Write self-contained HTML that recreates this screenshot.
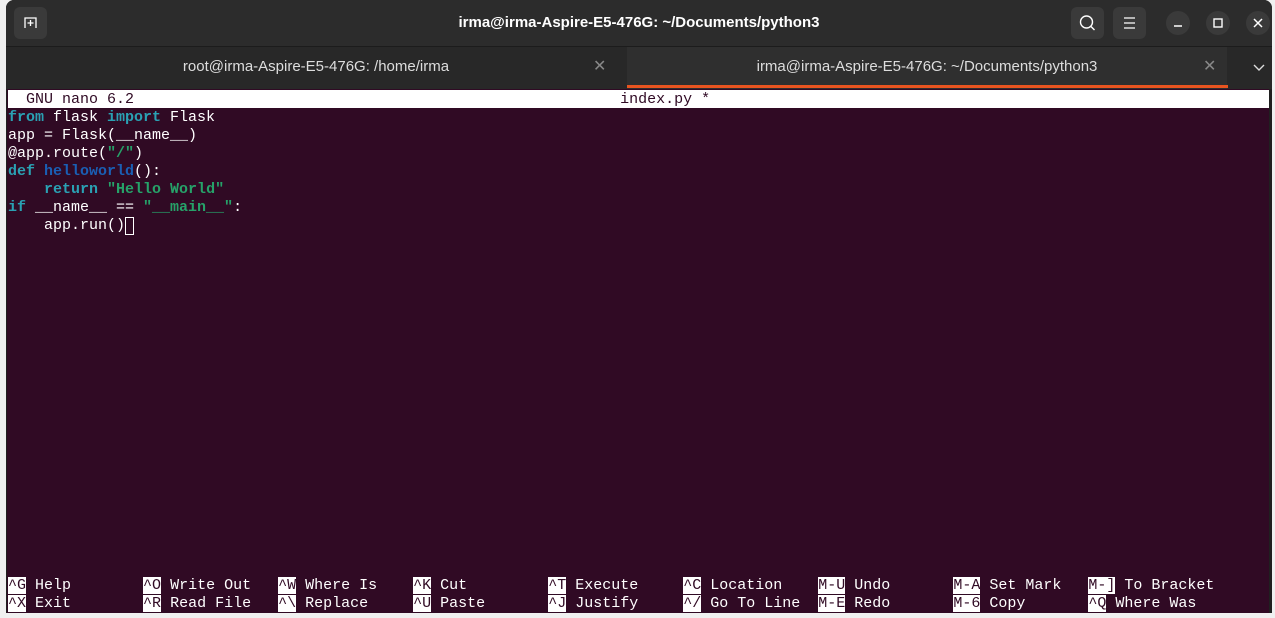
<!DOCTYPE html><html><head><style>
body{margin:0;width:1275px;height:618px;background:#f0f0f0;position:relative;overflow:hidden;font-family:"Liberation Sans",sans-serif}
.win{position:absolute;left:6px;top:0;width:1266px;height:613px;background:#202020;border-radius:8px 8px 0 0;overflow:hidden}
.tb{position:absolute;left:0;top:0;width:100%;height:46px;background:#2c2c2c;border-bottom:1px solid #1c1c1c}
.title{position:absolute;top:14px;left:0;width:100%;text-align:center;color:#fff;font-weight:bold;font-size:15px}
.btn{position:absolute;top:7px;width:33px;height:32px;background:#3a3a3a;border-radius:6px}
.cb{position:absolute;top:11px;width:24px;height:24px;border-radius:50%;background:#3a3a3a;color:#fff;text-align:center;line-height:24px;font-size:14px}
.tabs{position:absolute;top:47px;left:0;width:100%;height:42px;background:#282828}
.tab{position:absolute;top:0;height:42px;line-height:40px;text-align:center;color:#ddd;font-size:15px}
.x{position:absolute;top:0;color:#888;font-size:16px;line-height:40px}
.term{position:absolute;left:1px;top:89px;width:1262px;height:524px;background:#300a24;font-family:"Liberation Mono",monospace;font-size:15px;line-height:18px;color:#fff;white-space:pre}
.row{position:absolute;left:1px;height:18px}
.k{color:#2aa1b3;font-weight:bold}.f{color:#1a5fb4;font-weight:bold}.s{color:#26a269;font-weight:bold}
.inv{background:#fff;color:#300a24}
</style></head><body>
<div class="win">
<div class="tb">
<div class="btn" style="left:8px"><svg width="33" height="32"><path d="M11 21V11h11v10M16.5 13v6M13.5 16h6" stroke="#fff" stroke-width="1.3" fill="none"/></svg></div>
<div class="title">irma@irma-Aspire-E5-476G: ~/Documents/python3</div>
<div class="btn" style="left:1065px"><svg width="33" height="32"><circle cx="15.5" cy="15" r="6" stroke="#fff" stroke-width="1.4" fill="none"/><path d="M20 19.5l3.5 3.5" stroke="#fff" stroke-width="1.4"/></svg></div>
<div class="btn" style="left:1107px"><svg width="33" height="32"><path d="M11 11h11M11 16h11M11 21h11" stroke="#fff" stroke-width="1.3"/></svg></div>
<div class="cb" style="left:1160px"><svg width="24" height="24"><path d="M8 15h8" stroke="#fff" stroke-width="1.5"/></svg></div>
<div class="cb" style="left:1200px"><svg width="24" height="24"><rect x="8" y="8" width="8" height="8" stroke="#fff" stroke-width="1.4" fill="none"/></svg></div>
<div class="cb" style="left:1240px"><svg width="24" height="24"><path d="M8 8l8 8M16 8l-8 8" stroke="#fff" stroke-width="1.5"/></svg></div>
</div>
<div class="tabs">
<div class="tab" style="left:0;width:620px">root@irma-Aspire-E5-476G: /home/irma</div>
<div class="x" style="left:587px">✕</div>
<div class="tab" style="left:621px;width:600px;background:#2f2f2f">irma@irma-Aspire-E5-476G: ~/Documents/python3</div>
<div style="position:absolute;left:621px;top:38px;width:601px;height:3px;background:#e95420"></div>
<div class="x" style="left:1197px">✕</div>
<div class="x" style="left:1246px;color:#ddd"><svg width="14" height="40"><path d="M2 18l5 5 5-5" stroke="#ddd" stroke-width="1.4" fill="none"/></svg></div>
</div>
<div class="term">
<div class="row inv" style="top:1px;left:1px;width:1261px;line-height:20px">  GNU nano 6.2                                                      index.py *</div>
<div class="row" style="top:20px"><span class="k">from</span> flask <span class="k">import</span> Flask</div>
<div class="row" style="top:38px">app = Flask(__name__)</div>
<div class="row" style="top:56px">@app.route(<span class="s">"/"</span>)</div>
<div class="row" style="top:74px"><span class="k">def</span> <span class="f">helloworld</span>():</div>
<div class="row" style="top:92px">    <span class="k">return</span> <span class="s">"Hello World"</span></div>
<div class="row" style="top:110px"><span class="k">if</span> __name__ == <span class="s">"__main__"</span>:</div>
<div class="row" style="top:128px">    app.run()<span style="display:inline-block;width:7px;height:16px;border:1px solid #fff;vertical-align:top"></span></div>
<div class="row" style="top:488px"><span class="inv">^G</span> Help        <span class="inv">^O</span> Write Out   <span class="inv">^W</span> Where Is    <span class="inv">^K</span> Cut         <span class="inv">^T</span> Execute     <span class="inv">^C</span> Location    <span class="inv">M-U</span> Undo       <span class="inv">M-A</span> Set Mark   <span class="inv">M-]</span> To Bracket</div>
<div class="row" style="top:506px"><span class="inv">^X</span> Exit        <span class="inv">^R</span> Read File   <span class="inv">^\</span> Replace     <span class="inv">^U</span> Paste       <span class="inv">^J</span> Justify     <span class="inv">^/</span> Go To Line  <span class="inv">M-E</span> Redo       <span class="inv">M-6</span> Copy       <span class="inv">^Q</span> Where Was</div>
</div>
</div>
</body></html>
